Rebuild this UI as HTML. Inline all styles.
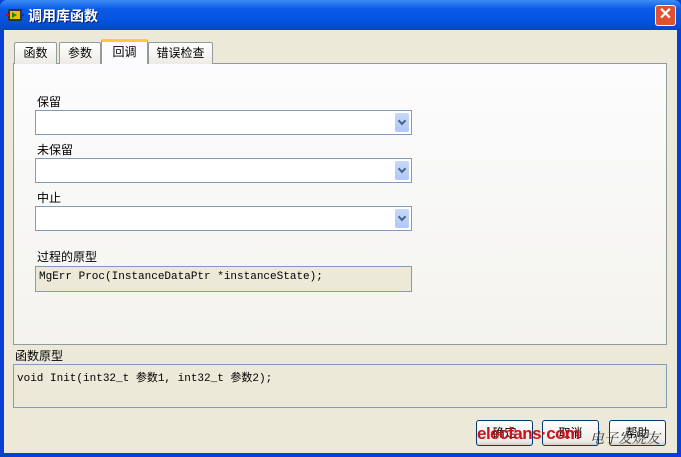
<!DOCTYPE html>
<html><head><meta charset="utf-8"><style>
*{box-sizing:border-box;margin:0;padding:0}
body{width:681px;height:457px;overflow:hidden;background:#0a3fd6;font-family:"Liberation Sans","Noto Sans CJK SC",sans-serif;font-size:12px;color:#000;position:relative}
.title{position:absolute;left:0;top:0;width:681px;height:30px;background:linear-gradient(#3d8cf5,#0a5ae8 30%,#0552e0 70%,#0845c7);border-radius:7px 7px 0 0}
.title span{position:absolute;left:28px;top:6px;color:#fff;font-weight:bold;font-size:14px;text-shadow:1px 1px #0a1f6e}
.close{position:absolute;left:655px;top:5px;width:21px;height:21px;background:#e0522e;border:1px solid #fff;border-radius:3px;color:#fff;font-size:16px;text-align:center;line-height:18px;font-weight:bold}
.body{position:absolute;left:4px;top:30px;width:673px;height:423px;background:#ece9d8}
.a{position:absolute}
.tab{position:absolute;top:42px;height:22px;border:1px solid #919b9c;border-bottom:none;background:linear-gradient(#fff,#ecebe6);text-align:center;line-height:20px;font-size:12px;border-radius:2px 2px 0 0}
.panel{position:absolute;left:13px;top:63px;width:654px;height:282px;border:1px solid #919b9c;background:linear-gradient(#fcfcfe,#f4f3ee)}
.dd{position:absolute;left:35px;width:377px;height:25px;border:1px solid #7f9db9;background:#fff}
.dd i{position:absolute;right:2px;top:2px;width:14px;height:19px;background:linear-gradient(#c7d8fb,#b1c8f6);border-radius:2px}
.dd i:after{content:"";position:absolute;left:4px;top:5px;width:4px;height:4px;border-right:2px solid #4d6185;border-bottom:2px solid #4d6185;transform:rotate(45deg)}
.box{position:absolute;border:1px solid #7f9db9;background:#ece9d8;font-family:"Liberation Mono","Noto Sans CJK SC",monospace;font-size:11px;padding:4px 3px}
.btn{position:absolute;top:420px;height:26px;border:1px solid #003c74;border-radius:3px;background:linear-gradient(#fff,#ecebe6 85%,#d6d0c5);text-align:center;line-height:24px}
</style></head><body>
<div class="title"><svg style="position:absolute;left:6px;top:8px" width="18" height="14"><rect x="2" y="1" width="14" height="12" fill="#333"/><rect x="4" y="3" width="10" height="8" fill="#e8c100"/><path d="M6 4l5 3-5 3z" fill="#1a8a1a"/><line x1="0" y1="7" x2="3" y2="7" stroke="#d00" stroke-width="2"/><line x1="15" y1="7" x2="18" y2="7" stroke="#22c" stroke-width="2"/></svg><span>调用库函数</span></div>
<div class="close">✕</div>
<div class="body"></div>
<div class="panel"></div>
<div class="tab" style="left:14px;width:43px">函数</div>
<div class="tab" style="left:59px;width:42px">参数</div>
<div class="tab" style="left:101px;top:39px;height:25px;width:47px;background:#fcfcfe;border-top:3px solid #ffc83c;line-height:20px">回调</div>
<div class="tab" style="left:148px;width:65px">错误检查</div>
<div class="a" style="left:37px;top:93px">保留</div>
<div class="dd" style="top:110px"><i></i></div>
<div class="a" style="left:37px;top:141px">未保留</div>
<div class="dd" style="top:158px"><i></i></div>
<div class="a" style="left:37px;top:189px">中止</div>
<div class="dd" style="top:206px"><i></i></div>
<div class="a" style="left:37px;top:248px">过程的原型</div>
<div class="box" style="left:35px;top:266px;width:377px;height:26px">MgErr Proc(InstanceDataPtr *instanceState);</div>
<div class="a" style="left:15px;top:347px">函数原型</div>
<div class="box" style="left:13px;top:364px;width:654px;height:44px">void  Init(int32_t 参数1, int32_t 参数2);</div>
<div class="btn" style="left:476px;width:57px">确定</div>
<div class="btn" style="left:542px;width:57px">取消</div>
<div class="btn" style="left:609px;width:57px">帮助</div>
<div class="a" style="left:477px;top:424px;color:#d0101a;font-weight:bold;font-size:17px;letter-spacing:-0.5px">elecfans·com</div>
<div class="a" style="left:590px;top:428px;color:#333;font-style:italic;font-size:14px;font-family:'Noto Serif CJK SC',serif">电子发烧友</div>
</body></html>
